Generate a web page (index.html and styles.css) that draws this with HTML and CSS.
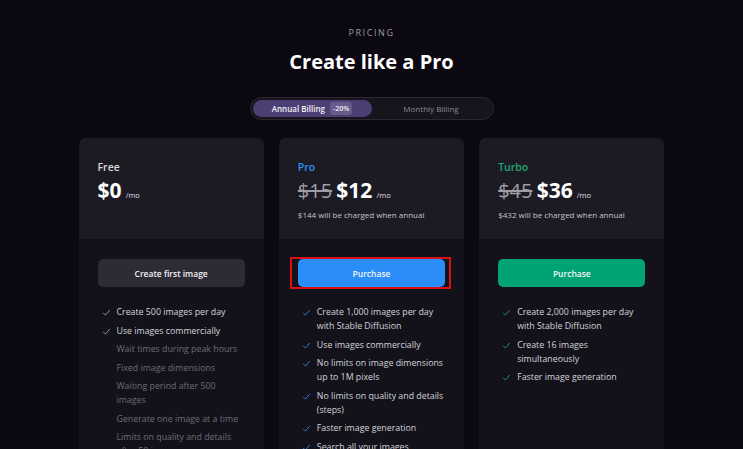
FILE: index.html
```html
<!DOCTYPE html>
<html lang="en">
<head>
    <meta charset="UTF-8">
    <meta name="viewport" content="width=device-width, initial-scale=1.0">
    <title>Pricing</title>
    <link rel="stylesheet" href="styles.css">
</head>
<body>
    <header class="intro">
        <div class="eyebrow">PRICING</div>
        <h1 class="title">Create like a Pro</h1>
        <div class="billing-toggle">
            <div class="toggle-option active">Annual Billing <span class="badge">-20%</span></div>
            <div class="toggle-option">Monthly Billing</div>
        </div>
    </header>

    <main class="plans">
        <section class="plan">
            <div class="plan-head">
                <div class="plan-name">Free</div>
                <div class="price"><span class="amount">$0</span> <span class="per">/mo</span></div>
            </div>
            <div class="plan-body">
                <button class="plan-btn btn-free">Create first image</button>
                <ul class="features">
                    <li class="yes"><svg class="check" viewBox="0 0 12 12"><path d="M1.5 6.5l3 3 6-7"/></svg>Create 500 images per day</li>
                    <li class="yes"><svg class="check" viewBox="0 0 12 12"><path d="M1.5 6.5l3 3 6-7"/></svg>Use images commercially</li>
                    <li class="no">Wait times during peak hours</li>
                    <li class="no">Fixed image dimensions</li>
                    <li class="no">Waiting period after 500 images</li>
                    <li class="no">Generate one image at a time</li>
                    <li class="no">Limits on quality and details after 50 images</li>
                </ul>
            </div>
        </section>

        <section class="plan plan-pro">
            <div class="plan-head">
                <div class="plan-name">Pro</div>
                <div class="price"><s class="old">$15</s> <span class="amount">$12</span> <span class="per">/mo</span></div>
                <div class="annual">$144 will be charged when annual</div>
            </div>
            <div class="plan-body">
                <div class="focus-ring">
                    <button class="plan-btn btn-pro">Purchase</button>
                </div>
                <ul class="features">
                    <li class="yes"><svg class="check" viewBox="0 0 12 12"><path d="M1.5 6.5l3 3 6-7"/></svg>Create 1,000 images per day with Stable Diffusion</li>
                    <li class="yes"><svg class="check" viewBox="0 0 12 12"><path d="M1.5 6.5l3 3 6-7"/></svg>Use images commercially</li>
                    <li class="yes"><svg class="check" viewBox="0 0 12 12"><path d="M1.5 6.5l3 3 6-7"/></svg>No limits on image dimensions up to 1M pixels</li>
                    <li class="yes"><svg class="check" viewBox="0 0 12 12"><path d="M1.5 6.5l3 3 6-7"/></svg>No limits on quality and details (steps)</li>
                    <li class="yes"><svg class="check" viewBox="0 0 12 12"><path d="M1.5 6.5l3 3 6-7"/></svg>Faster image generation</li>
                    <li class="yes"><svg class="check" viewBox="0 0 12 12"><path d="M1.5 6.5l3 3 6-7"/></svg>Search all your images</li>
                </ul>
            </div>
        </section>

        <section class="plan plan-turbo">
            <div class="plan-head">
                <div class="plan-name">Turbo</div>
                <div class="price"><s class="old">$45</s> <span class="amount">$36</span> <span class="per">/mo</span></div>
                <div class="annual">$432 will be charged when annual</div>
            </div>
            <div class="plan-body">
                <button class="plan-btn btn-turbo">Purchase</button>
                <ul class="features">
                    <li class="yes"><svg class="check" viewBox="0 0 12 12"><path d="M1.5 6.5l3 3 6-7"/></svg>Create 2,000 images per day with Stable Diffusion</li>
                    <li class="yes"><svg class="check" viewBox="0 0 12 12"><path d="M1.5 6.5l3 3 6-7"/></svg>Create 16 images simultaneously</li>
                    <li class="yes"><svg class="check" viewBox="0 0 12 12"><path d="M1.5 6.5l3 3 6-7"/></svg>Faster image generation</li>
                </ul>
            </div>
        </section>
    </main>
</body>
</html>
```

FILE: styles.css
```css
body {
    margin: 0;
    padding-top: 26px;
    background-color: #0b0812;
    color: #d6d5dc;
    font-family: "Open Sans", "Noto Sans", sans-serif;
    overflow: hidden;
}
.intro {
    display: flex;
    flex-direction: column;
    align-items: center;
}
.eyebrow {
    font-size: 9px;
    line-height: 14px;
    letter-spacing: 1.6px;
    color: #9b99a3;
}
.title {
    margin: 8px 0 0;
    font-size: 20px;
    line-height: 28px;
    font-weight: 700;
    color: #ffffff;
}
.billing-toggle {
    margin-top: 21px;
    width: 244px;
    height: 23px;
    box-sizing: border-box;
    padding: 2px;
    display: grid;
    grid-template-columns: 1fr 1fr;
    border: 1px solid #2a2833;
    border-radius: 12px;
    background-color: #16141d;
}
.toggle-option {
    display: flex;
    align-items: center;
    justify-content: center;
    gap: 5px;
    font-size: 8px;
    color: #8d8b95;
    border-radius: 10px;
}
.toggle-option.active {
    background-color: #4b3f73;
    color: #f2f1f6;
    font-weight: 600;
}
.badge {
    padding: 2px 3px;
    border-radius: 3px;
    background-color: #675b8a;
    font-size: 7px;
    font-weight: 600;
}
.plans {
    margin: 18px auto 0;
    width: 586px;
    display: grid;
    grid-template-columns: repeat(3, 1fr);
    gap: 15px;
}
.plan {
    border-radius: 7px;
    overflow: hidden;
    background-color: #13121b;
}
.plan-head {
    height: 101px;
    box-sizing: border-box;
    padding: 22px 19px 0;
    background-color: #1c1b24;
}
.plan-name {
    font-size: 10.5px;
    line-height: 14px;
    font-weight: 600;
    color: #d8d7de;
}
.plan-pro .plan-name {
    color: #2f8ff5;
}
.plan-turbo .plan-name {
    color: #1fa67a;
}
.price {
    margin-top: 2px;
    line-height: 28px;
    white-space: nowrap;
}
.amount {
    font-size: 21px;
    font-weight: 700;
    color: #ffffff;
}
.old {
    font-size: 20px;
    color: #9e9da6;
}
.per {
    font-size: 7.5px;
    color: #e0dfe6;
}
.annual {
    margin-top: 0;
    font-size: 8px;
    line-height: 12px;
    color: #c4c3cb;
}
.plan-body {
    padding: 20px 19px 0;
}
.plan-btn {
    display: block;
    width: 100%;
    height: 28px;
    border: none;
    border-radius: 5px;
    font-family: inherit;
    font-size: 8.5px;
    font-weight: 600;
    color: #f3f3f6;
}
.btn-free {
    background-color: #2d2b35;
}
.btn-pro {
    background-color: #2b8ef8;
}
.btn-turbo {
    background-color: #00a374;
}
.focus-ring {
    margin: -2px -6px -2px -8px;
    padding: 0 4px 0 6px;
    border: 2px solid #dd0f12;
}
.features {
    list-style: none;
    margin: 18px 0 0;
    padding: 0 0 0 3px;
    display: flex;
    flex-direction: column;
    gap: 4.5px;
}
.features li {
    position: relative;
    padding-left: 16px;
    font-size: 8.8px;
    line-height: 14px;
}
.features li.yes {
    color: #d3d2d9;
}
.features li.no {
    color: #6d6b75;
}
.check {
    position: absolute;
    left: 1px;
    top: 3px;
    width: 9px;
    height: 9px;
    fill: none;
    stroke: #a6a5ad;
    stroke-width: 1.1;
}
.plan-pro .check {
    stroke: #2f8ff5;
}
.plan-turbo .check {
    stroke: #1fa67a;
}
```
